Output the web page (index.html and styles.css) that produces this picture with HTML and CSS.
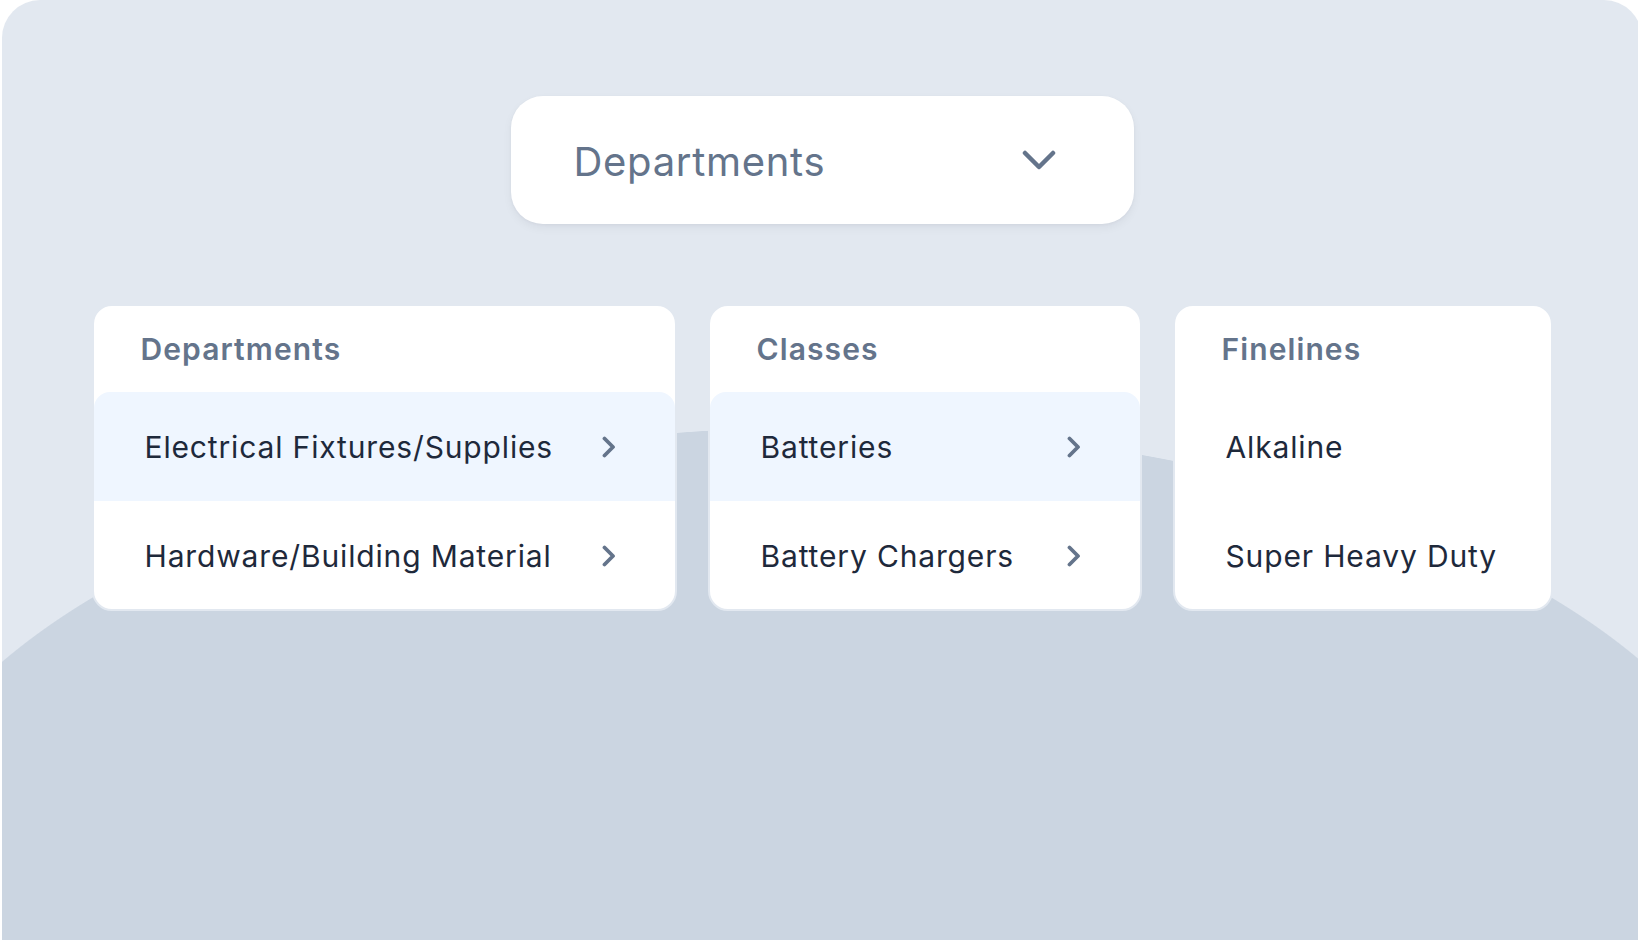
FILE: index.html
```html
<!DOCTYPE html>
<html lang="en">
<head>
<meta charset="utf-8">
<title>Departments</title>
<link rel="stylesheet" href="styles.css">
</head>
<body>
<div class="frame">
  <div class="dropdown">
    <span class="dropdown-label">Departments</span>
    <svg class="chev-down" width="34" height="20" viewBox="0 0 34 20" aria-hidden="true"><polyline points="3,3 17,17 31,3" fill="none" stroke="#64748b" stroke-width="4.5" stroke-linecap="round" stroke-linejoin="round"/></svg>
  </div>
  <div class="columns">
    <div class="card card-dept">
      <div class="card-head">Departments</div>
      <div class="item active"><span>Electrical Fixtures/Supplies</span><svg class="chev" width="14" height="22" viewBox="0 0 14 22" aria-hidden="true"><polyline points="2.5,2.5 11,11 2.5,19.5" fill="none" stroke="#64748b" stroke-width="3.8" stroke-linecap="round" stroke-linejoin="round"/></svg></div>
      <div class="item"><span>Hardware/Building Material</span><svg class="chev" width="14" height="22" viewBox="0 0 14 22" aria-hidden="true"><polyline points="2.5,2.5 11,11 2.5,19.5" fill="none" stroke="#64748b" stroke-width="3.8" stroke-linecap="round" stroke-linejoin="round"/></svg></div>
    </div>
    <div class="card card-class">
      <div class="card-head">Classes</div>
      <div class="item active"><span>Batteries</span><svg class="chev" width="14" height="22" viewBox="0 0 14 22" aria-hidden="true"><polyline points="2.5,2.5 11,11 2.5,19.5" fill="none" stroke="#64748b" stroke-width="3.8" stroke-linecap="round" stroke-linejoin="round"/></svg></div>
      <div class="item"><span>Battery Chargers</span><svg class="chev" width="14" height="22" viewBox="0 0 14 22" aria-hidden="true"><polyline points="2.5,2.5 11,11 2.5,19.5" fill="none" stroke="#64748b" stroke-width="3.8" stroke-linecap="round" stroke-linejoin="round"/></svg></div>
    </div>
    <div class="card card-fine">
      <div class="card-head">Finelines</div>
      <div class="item"><span>Alkaline</span></div>
      <div class="item"><span>Super Heavy Duty</span></div>
    </div>
  </div>
</div>
</body>
</html>
```

FILE: styles.css
```css
html, body {
  margin: 0;
  padding: 0;
  background: #ffffff;
  overflow: hidden;
  height: 100%;
}

body {
  font-family: Inter, "Noto Sans", "Liberation Sans", sans-serif;
}

.frame {
  margin-left: 2px;
  width: 1640px;
  height: 1000px;
  box-sizing: border-box;
  border-radius: 38px 38px 0 0;
  background:
    radial-gradient(950px 473px at 820px 900px, #cbd5e1 99.85%, rgba(226,232,240,0) 100%),
    #e2e8f0;
  padding-top: 96px;
  display: flex;
  flex-direction: column;
  align-items: center;
}

.dropdown {
  width: 623px;
  height: 128px;
  box-sizing: border-box;
  background: #ffffff;
  border-radius: 32px;
  display: flex;
  align-items: center;
  justify-content: space-between;
  padding: 0 78px 0 63px;
  box-shadow: 0 4px 10px rgba(15, 23, 42, 0.05), 0 1px 3px rgba(15, 23, 42, 0.04);
}

.dropdown-label {
  font-size: 40px;
  font-weight: 400;
  letter-spacing: 0.7px;
  color: #64748b;
  line-height: 1;
  padding-top: 4px;
}

.chev-down {
  display: block;
}

.columns {
  margin-top: 80px;
  display: flex;
  gap: 31px;
}

.card {
  background: #ffffff;
  border: 2px solid #e2e8f0;
  border-radius: 20px;
  box-sizing: border-box;
  display: flex;
  flex-direction: column;
}

.card-dept { width: 585px; }
.card-class { width: 434px; }
.card-fine { width: 380px; }

.card-head {
  height: 86px;
  display: flex;
  align-items: center;
  padding-left: 47px;
  font-size: 30px;
  font-weight: 600;
  letter-spacing: 1.1px;
  color: #64748b;
}

.item {
  box-sizing: border-box;
  height: 109px;
  display: flex;
  align-items: center;
  justify-content: space-between;
  padding: 0 59px 0 51px;
  font-size: 30px;
  font-weight: 400;
  letter-spacing: 0.85px;
  color: #1e293b;
  white-space: nowrap;
}

.item:last-child {
  height: 108px;
  padding-top: 2px;
}

.item.active {
  background: #eff6ff;
  border-radius: 16px 16px 0 0;
}

.chev {
  display: block;
  flex: none;
}
```
